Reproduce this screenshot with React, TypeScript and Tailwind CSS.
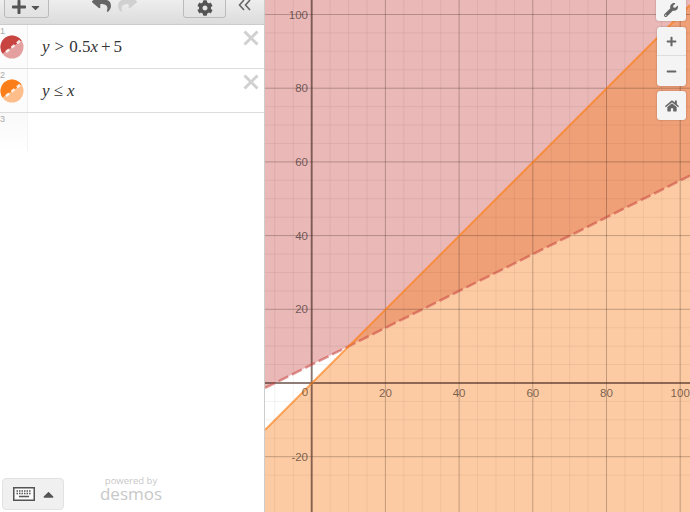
import React from "react";
import { FaCog, FaHome, FaMinus, FaPlus, FaReply, FaWrench, FaCaretDown, FaCaretUp } from "react-icons/fa";

const X0 = 311.7, Y0 = 383, U = 3.685;
const px = (x: number) => X0 + U * x;
const py = (y: number) => Y0 - U * y;
const xs: number[] = [];
for (let v = -10; v <= 100; v += 5) xs.push(v);
const ys: number[] = [];
for (let v = -25; v <= 100; v += 5) ys.push(v);

function Graph() {
  const xLabels = [20, 40, 60, 80, 100];
  const yLabels = [100, 80, 60, 40, 20, -20];
  return (
    <svg viewBox="265 0 425 512" className="block w-[425px] h-[512px]" style={{ fontFamily: '"Liberation Sans", Arial, sans-serif' }}>
      <rect x="265" y="0" width="425" height="512" fill="#ffffff" />
      <polygon points="265,0 690,0 690,175.6 265,388" fill="#c74440" fillOpacity="0.38" />
      <polygon points="265,430 690,5 690,512 265,512" fill="#fa7e19" fillOpacity="0.4" />
      {xs.map((v) => (
        <line key={"x" + v} x1={px(v)} x2={px(v)} y1="0" y2="512" stroke="#000" strokeOpacity={v % 20 === 0 ? 0.24 : 0.055} strokeWidth="1" />
      ))}
      {ys.map((v) => (
        <line key={"y" + v} y1={py(v)} y2={py(v)} x1="265" x2="690" stroke="#000" strokeOpacity={v % 20 === 0 ? 0.24 : 0.055} strokeWidth="1" />
      ))}
      <line x1={X0} x2={X0} y1="0" y2="512" stroke="#4a2a20" strokeOpacity="0.55" strokeWidth="2" />
      <line x1="265" x2="690" y1={Y0} y2={Y0} stroke="#4a2a20" strokeOpacity="0.55" strokeWidth="2" />
      <line x1="265" y1="388" x2="690" y2="175.6" stroke="#c74440" strokeOpacity="0.55" strokeWidth="2.5" strokeDasharray="11 4" />
      <line x1="265" y1="430" x2="690" y2="5" stroke="#fa7e19" strokeOpacity="0.65" strokeWidth="2" />
      <g fontSize="11.5" fill="#000" fillOpacity="0.55">
        {xLabels.map((v) => (
          <text key={v} x={px(v)} y="397" textAnchor="middle">{v}</text>
        ))}
        {yLabels.map((v) => (
          <text key={v} x="308" y={py(v) + 4} textAnchor="end">{v}</text>
        ))}
        <text x="305" y="396" textAnchor="middle">0</text>
      </g>
    </svg>
  );
}

function Swatch({ dark, light }: { dark: string; light: string }) {
  return (
    <svg width="24" height="24" viewBox="0 0 24 24" className="absolute left-0 top-[10px]">
      <circle cx="12" cy="12" r="11.5" fill={light} />
      <path d="M2.5 18.5 A11.5 11.5 0 0 1 21.5 5.5 Z" fill={dark} />
      <line x1="6" y1="17" x2="21" y2="5" stroke="#fff" strokeWidth="2.5" strokeDasharray="4 3" strokeOpacity="0.85" />
    </svg>
  );
}

function Row({ n, children, swatch, close }: { n: number; children?: React.ReactNode; swatch?: React.ReactNode; close?: boolean }) {
  return (
    <div className="relative flex h-[44px] border-b border-[#dddddd] bg-white">
      <div className="relative w-[28px] shrink-0 border-r border-[#eeeeee] bg-[#fcfcfc]">
        <span className="absolute left-0 top-[1px] text-[9px] leading-[10px] text-[#aaaaaa]" style={{ fontFamily: '"Liberation Sans", sans-serif' }}>{n}</span>
        {swatch}
      </div>
      <div className="flex flex-1 items-center pl-[14px] pt-[1px] text-[17px] text-[#333333]" style={{ fontFamily: '"Liberation Serif", serif' }}>
        {children}
      </div>
      {close && (
        <svg width="16" height="16" viewBox="0 0 16 16" className="absolute right-[5px] top-[5px]">
          <path d="M1.5 1.5 L14.5 14.5 M14.5 1.5 L1.5 14.5" stroke="#d0d0d0" strokeWidth="3" />
        </svg>
      )}
    </div>
  );
}

export default function App() {
  return (
    <div className="flex h-[512px] w-[690px] overflow-hidden bg-white">
      <div className="relative flex h-full w-[265px] shrink-0 flex-col border-r border-[#cccccc]">
        <div className="flex h-[25px] shrink-0 items-end overflow-hidden border-b border-[#cccccc] bg-gradient-to-b from-[#eeeeee] to-[#dcdcdc] pb-[6px] pl-[4px]">
          <div className="flex h-[30px] w-[45px] items-center justify-center gap-[2px] rounded-b-[3px] border border-[#bbbbbb] bg-gradient-to-b from-[#eeeeee] to-[#e2e2e2] pt-[8px] text-[#555555]">
            <FaPlus size={16} />
            <FaCaretDown size={13} />
          </div>
          <div className="mb-[5px] ml-[43px] flex gap-[7px]">
            <FaReply size={19} className="text-[#666666]" />
            <FaReply size={19} className="-scale-x-100 text-[#d0d0d0]" />
          </div>
          <div className="ml-[46px] flex h-[30px] w-[43px] items-center justify-center rounded-b-[3px] border border-[#bbbbbb] bg-gradient-to-b from-[#eeeeee] to-[#e2e2e2] pt-[10px] text-[#555555]">
            <FaCog size={16} />
          </div>
          <svg width="14" height="14" viewBox="0 0 14 14" className="mb-[5px] ml-[12px]">
            <path d="M6 1 L1.5 6 L6 11 M12 1 L7.5 6 L12 11" fill="none" stroke="#666666" strokeWidth="1.6" />
          </svg>
        </div>
        <Row n={1} close swatch={<Swatch dark="#c74440" light="#e3a09e" />}>
          <i>y</i>
          <span className="mx-[5px]">&gt;</span>
          <span>0.5</span>
          <i>x</i>
          <span className="mx-[3px]">+</span>
          <span>5</span>
        </Row>
        <Row n={2} close swatch={<Swatch dark="#fa7e19" light="#fdbe8c" />}>
          <i>y</i>
          <span className="mx-[4px]">≤</span>
          <i>x</i>
        </Row>
        <div className="relative flex h-[38px]">
          <div className="relative w-[28px] border-r border-[#f4f4f4] bg-gradient-to-b from-[#f9f9f9] to-white">
            <span className="absolute left-0 top-[1px] text-[9px] leading-[10px] text-[#aaaaaa]" style={{ fontFamily: '"Liberation Sans", sans-serif' }}>3</span>
          </div>
        </div>
        <div className="flex-1" />
        <div className="flex h-[38px] items-center pb-[2px] pl-[2px]">
          <div className="flex h-[32px] w-[62px] items-center justify-center gap-[5px] self-end rounded-[4px] border border-[#e2e2e2] bg-[#f0f0f0] pl-[4px]">
            <svg width="22" height="14" viewBox="0 0 22 14">
              <rect x="0.75" y="0.75" width="20.5" height="12.5" fill="#fafafa" stroke="#555555" strokeWidth="1.5" />
              <path d="M3.5 4 H18.5 M3.5 6.5 H18.5" stroke="#555555" strokeWidth="1.5" strokeDasharray="1.5 1" />
              <path d="M6 9.5 H16" stroke="#555555" strokeWidth="1.5" />
            </svg>
            <FaCaretUp size={17} className="text-[#555555]" />
          </div>
          <div className="ml-[35px] flex w-[64px] flex-col items-center self-start pt-[1px] text-[#c8c8c8]" style={{ fontFamily: '"Open Sans", sans-serif' }}>
            <span className="text-[9.5px] leading-[11px]">powered by</span>
            <span className="text-[17px] leading-[15px]">desmos</span>
          </div>
        </div>
      </div>
      <div className="relative h-full flex-1">
        <Graph />
        <div className="absolute right-[4px] top-[-8px] flex h-[29px] w-[30px] items-center justify-center rounded-[3px] bg-[#f4f4f4] pt-[6px] text-[#666666] shadow-[0_0_2px_rgba(0,0,0,0.3)]">
          <FaWrench size={14} />
        </div>
        <div className="absolute right-[4px] top-[27px] flex w-[29px] flex-col rounded-[3px] bg-[#f4f4f4] text-[#666666] shadow-[0_0_2px_rgba(0,0,0,0.3)]">
          <div className="flex h-[29px] items-center justify-center border-b border-[#dddddd]"><FaPlus size={11} /></div>
          <div className="flex h-[30px] items-center justify-center"><FaMinus size={11} /></div>
        </div>
        <div className="absolute right-[4px] top-[91px] flex h-[29px] w-[29px] items-center justify-center rounded-[3px] bg-[#f4f4f4] text-[#666666] shadow-[0_0_2px_rgba(0,0,0,0.3)]">
          <FaHome size={14} />
        </div>
      </div>
    </div>
  );
}
